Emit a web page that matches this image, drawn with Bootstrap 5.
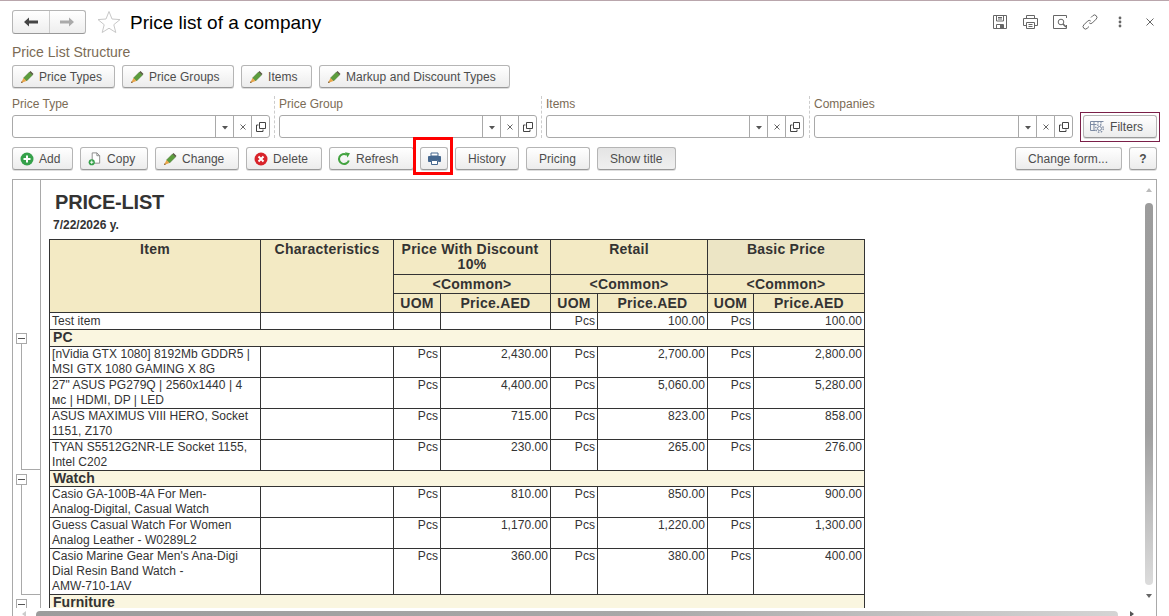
<!DOCTYPE html>
<html lang="en">
<head>
    <meta charset="UTF-8">
    <title>Price list of a company</title>
    <link href="https://cdn.jsdelivr.net/npm/bootstrap@5.3.0/dist/css/bootstrap.min.css" rel="stylesheet">
    <style>
        html, body { height: 616px; overflow: hidden; }
        body { font-family: "Liberation Sans", Arial, sans-serif; font-size: 12px; color: #333; background: #fff; border-top: 1px solid #b9a6ac; padding: 0 12px; }

        .head-row { margin-top: 9px; height: 24px; }
        .hist-group { width: 74px; height: 24px; border: 1px solid #b5b5b5; border-bottom-color: #999; border-radius: 3px; background: linear-gradient(#fff, #eee); }
        .hist-group span { flex: 1; display: flex; align-items: center; justify-content: center; }
        .hist-group span + span { border-left: 1px solid #ccc; }
        .fav-star { margin-left: 11px; }
        .page-title { font-size: 19px; line-height: 24px; color: #000; margin: 1px 0 0 9px; font-weight: 400; }
        .tool-ico { width: 30px; display: flex; justify-content: center; }
        .head-tools { margin-right: -8px; }

        .struct-cap { margin-top: 10px; font-size: 14px; line-height: 17px; color: #7b6b55; }
        .btn-row { gap: 7px; }
        .struct-row { margin-top: 4px; }
        .action-row { margin-top: 9px; }

        .btn.v8-btn { height: 23px; padding: 0 12px; font-size: 12px; line-height: 20px; color: #4d4d4d; letter-spacing: .05px; background: linear-gradient(#fff, #ececec); border: 1px solid #b5b5b5; border-bottom-color: #999; border-radius: 3px; display: inline-flex; align-items: center; gap: 5px; white-space: nowrap; box-shadow: 0 1px 0 #ddd; }
        .btn.v8-ico { padding: 0 0 0 7px; }
        .btn.v8-pressed { background: linear-gradient(#e4e4e4, #f0f0f0); }
        .bw-types { width: 103px; } .bw-groups { width: 112px; } .bw-items { width: 71px; } .bw-markup { width: 191px; }
        .bw-add { width: 61px; } .bw-copy { width: 68px; } .bw-change { width: 84px; } .bw-delete { width: 76px; } .bw-refresh { width: 85px; }
        .bw-history { width: 64px; } .bw-pricing { width: 64px; } .bw-title { width: 79px; } .bw-form { width: 107px; }
        .btn.bw-help { width: 28px; padding: 0; justify-content: center; }
        .print-wrap { position: relative; margin-left: -1px; }
        .print-wrap::after { content: ""; position: absolute; left: -7px; right: -5px; top: -10px; bottom: -5px; border: 3px solid #f00; }
        .btn.print-btn { width: 28px; padding: 0; justify-content: center; }
        .btn.filters-btn { position: relative; width: 74px; margin-left: 10px; padding: 0 6px; gap: 5px; overflow: visible; }
        .btn.filters-btn::after { content: ""; position: absolute; left: -4px; right: -4px; top: -4px; bottom: -5px; border: 1px solid #7a1f48; }

        .filter-row { margin-top: 8px; height: 42px; }
        .filter-field { width: 258px; }
        .filter-field.wide { width: 259px; }
        .filter-label { line-height: 16px; margin-bottom: 3px; color: #7b6b55; }
        .filter-sep { width: 1px; margin: 0 4px 0 4px; border-left: 1px dashed #ccc; }
        .filter-sep.last-sep { margin: 0 4px 0 5px; }
        .input-group .form-control.v8-input { height: 23px; min-height: 23px; padding: 0 4px; font-size: 12px; border-color: #a9a9a9; border-radius: 3px 0 0 3px; }
        .input-group .btn.v8-cell { width: 19px; height: 23px; padding: 0; display: flex; align-items: center; justify-content: center; background: #fff; border: 1px solid #a9a9a9; margin-left: -1px; border-radius: 0; color: #555; }
        .input-group .btn.v8-cell:last-child { border-radius: 0 3px 3px 0; }

        .report-frame { position: relative; margin-top: 9px; width: 1145px; height: 437px; border: 1px solid #a9a9a9; border-bottom: 0; display: flex; overflow: hidden; }
        .outline-gutter { position: relative; flex: 0 0 28px; border-right: 1px solid #a9a9a9; }
        .report-body { flex: 1; padding-left: 8px; }
        .report-title { font-size: 20px; line-height: 24px; font-weight: 700; margin: 10px 0 0 6px; color: #333; letter-spacing: -.2px; }
        .report-date { font-size: 12px; line-height: 15px; font-weight: 700; margin: 4px 0 0 4px; }

        .price-table { table-layout: fixed; border-collapse: collapse; margin-top: 6px; width: 815px; line-height: 15px; letter-spacing: .05px; }
        .price-table td, .price-table th { border: 1px solid #333; padding: 0 2px; vertical-align: top; overflow: hidden; }
        .price-table th { background: #f3eac4; font-size: 14px; text-align: center; font-weight: 700; line-height: 15px; padding-top: 2px; letter-spacing: .25px; }
        .price-table th.hilite { background: #ece5c5; box-shadow: 0 0 0 3px rgba(0, 0, 0, .04); }
        .price-table th.disc-head { text-indent: -4px; }
        .price-table td.num { text-align: right; }
        .price-table td.grp { background: #faf6e0; font-size: 14px; font-weight: 700; padding-left: 3px; }
        .rh-h1 { height: 35px; } .rh-h2 { height: 19px; } .rh-1 { height: 17px; }
        .rh-g { height: 17px; } .rh-g2 { height: 16px; } .rh-2 { height: 31px; } .rh-3 { height: 46px; }
        .rh-1 td { padding-top: 1px; }

        .tree-box { position: absolute; left: 3px; width: 11px; height: 11px; border: 1px solid #a9a9a9; background: #fff; }
        .tree-box::after { content: ""; position: absolute; left: 1px; right: 1px; top: 4px; height: 1px; background: #555; }
        .tree-line { position: absolute; left: 8px; width: 20px; border-left: 1px solid #a9a9a9; border-bottom: 1px solid #a9a9a9; }
        .box-pc { top: 153px; } .line-pc { top: 164px; height: 126px; }
        .box-watch { top: 294px; } .line-watch { top: 305px; height: 110px; }
        .box-furn { top: 419px; }

        .vscroll-area { position: absolute; right: 0; top: 0; bottom: 0; width: 17px; background: #fff; }
        .vscroll-thumb { position: absolute; left: 6px; top: 23px; height: 382px; width: 8px; border-radius: 4px; background: linear-gradient(#9c9c9c, #a0a0a0 60%, #dcdcdc); }
        .arr-up, .arr-down { position: absolute; left: 7px; width: 0; height: 0; border-left: 3px solid transparent; border-right: 3px solid transparent; }
        .arr-up { top: 8px; border-bottom: 4px solid #bbb; }
        .arr-down { top: 414px; border-top: 4px solid #666; }
        .hscroll-area { position: absolute; left: 0; right: 0; top: 428px; height: 9px; background: #fff; }
        .hscroll-thumb { position: absolute; left: 23px; width: 1082px; top: 3px; height: 6px; border-radius: 4px 4px 0 0; background: linear-gradient(90deg, #9c9c9c, #a8a8a8 55%, #d4d4d4); }
        .arr-left { position: absolute; left: 9px; top: 3px; width: 0; height: 0; border-top: 3px solid transparent; border-bottom: 3px solid transparent; border-right: 4px solid #ccc; }
        .arr-right { position: absolute; left: 1117px; top: 3px; width: 0; height: 0; border-top: 3px solid transparent; border-bottom: 3px solid transparent; border-left: 4px solid #555; }
    </style>
</head>
<body>
    <svg width="0" height="0" class="position-absolute">
        <symbol id="i-pencil" viewBox="0 0 14 14">
            <path d="M3.500 8l6-6 3 3-6 6z" fill="#5c9d3c" stroke="#40702c" stroke-width=".5"/>
            <path d="M9.500 2l1-1 3 3-1 1z" fill="#55523f"/>
            <path d="M3.500 8l3 3L1 13z" fill="#e9a54a"/>
            <path d="M1.700 11.300 2.800 12.400 1 13z" fill="#6a4d28"/>
        </symbol>
        <symbol id="i-cross" viewBox="0 0 8 8">
            <path d="M1.500 1.500l5 5M6.500 1.500l-5 5" stroke="#666" stroke-width="1" fill="none"/>
        </symbol>
        <symbol id="i-down" viewBox="0 0 8 8">
            <path d="M1 3h6L4 6.500z" fill="#555"/>
        </symbol>
        <symbol id="i-open" viewBox="0 0 12 12">
            <path d="M4.500 1.500h6v6h-6z M3.500 4h-2v6.500h6.500v-2" fill="none" stroke="#444" stroke-width="1"/>
        </symbol>
    </svg>

    <!-- Cabecera -->
    <div class="d-flex align-items-center head-row">
        <div class="d-flex hist-group">
            <span>
                <svg width="16" height="12" viewBox="0 0 16 12"><path d="M1 6l5-4.500V4.500h9v3H6v3z" fill="#444"/></svg>
            </span>
            <span>
                <svg width="16" height="12" viewBox="0 0 16 12"><path d="M15 6l-5-4.500V4.500H1v3h9v3z" fill="#aaa"/></svg>
            </span>
        </div>
        <svg class="fav-star" width="24" height="24" viewBox="0 0 24 24"><path d="M12 1.500l3 7.500 8 .6-6.200 5.100 2 7.800L12 18.200l-6.800 4.300 2-7.800L1 9.600 9 9z" fill="#fff" stroke="#c8c8c8" stroke-width="1"/></svg>
        <h1 class="page-title">Price list of a company</h1>
        <div class="d-flex align-items-center ms-auto head-tools">
            <span class="tool-ico"><svg width="16" height="16" viewBox="0 0 16 16" fill="none" stroke="#666"><path d="M1.500 1.500h13v13h-13z"/><path d="M4.500 1.500v5.500h7V1.500M6 3.500h4M6 5h4M4.500 14.500v-4h7v4"/><path d="M8 11h3v3H8z" fill="#666" stroke="none"/></svg></span>
            <span class="tool-ico"><svg width="17" height="16" viewBox="0 0 17 16" fill="none" stroke="#666"><path d="M4.500 4.500v-3h8v3M4 11.500H1.500v-7h14v7H13"/><path d="M4.500 8.500h8v6h-8zM6.500 10.500h4M6.500 12.500h4"/></svg></span>
            <span class="tool-ico"><svg width="16" height="16" viewBox="0 0 16 16" fill="none" stroke="#666"><path d="M5 1.500H1.500v13h13V11M5 1.500h9.500V4"/><circle cx="9" cy="8" r="2.800"/><path d="M11 10l3 3" stroke-width="1.600"/></svg></span>
            <span class="tool-ico"><svg width="16" height="16" viewBox="0 0 16 16" fill="none" stroke="#666"><path d="M9 3.500l1.800-1.800a2.300 2.300 0 0 1 3.400 3.400l-3.800 3.800a2.300 2.300 0 0 1-3.200 0"/><path d="M7 12.500l-1.800 1.800a2.300 2.300 0 0 1-3.400-3.400l3.800-3.800a2.300 2.300 0 0 1 3.200 0"/></svg></span>
            <span class="tool-ico"><svg width="4" height="12" viewBox="0 0 4 12" fill="#666"><circle cx="2" cy="2" r="1.400"/><circle cx="2" cy="6" r="1.400"/><circle cx="2" cy="10" r="1.400"/></svg></span>
            <span class="tool-ico"><svg width="10" height="10" viewBox="0 0 10 10"><path d="M1.500 1.500l7 7M8.500 1.500l-7 7" stroke="#666" fill="none"/></svg></span>
        </div>
    </div>

    <div class="struct-cap">Price List Structure</div>
    <div class="d-flex btn-row struct-row">
        <button class="btn v8-btn v8-ico bw-types"><svg width="14" height="14"><use href="#i-pencil"/></svg>Price Types</button>
        <button class="btn v8-btn v8-ico bw-groups"><svg width="14" height="14"><use href="#i-pencil"/></svg>Price Groups</button>
        <button class="btn v8-btn v8-ico bw-items"><svg width="14" height="14"><use href="#i-pencil"/></svg>Items</button>
        <button class="btn v8-btn v8-ico bw-markup"><svg width="14" height="14"><use href="#i-pencil"/></svg>Markup and Discount Types</button>
    </div>

    <!-- Filtros -->
    <div class="d-flex filter-row">
        <div class="filter-field">
            <div class="filter-label">Price Type</div>
            <div class="input-group">
                <input class="form-control v8-input" type="text">
                <button class="btn v8-cell"><svg width="8" height="8"><use href="#i-down"/></svg></button>
                <button class="btn v8-cell"><svg width="8" height="8"><use href="#i-cross"/></svg></button>
                <button class="btn v8-cell"><svg width="12" height="12"><use href="#i-open"/></svg></button>
            </div>
        </div>
        <div class="filter-sep"></div>
        <div class="filter-field">
            <div class="filter-label">Price Group</div>
            <div class="input-group">
                <input class="form-control v8-input" type="text">
                <button class="btn v8-cell"><svg width="8" height="8"><use href="#i-down"/></svg></button>
                <button class="btn v8-cell"><svg width="8" height="8"><use href="#i-cross"/></svg></button>
                <button class="btn v8-cell"><svg width="12" height="12"><use href="#i-open"/></svg></button>
            </div>
        </div>
        <div class="filter-sep"></div>
        <div class="filter-field">
            <div class="filter-label">Items</div>
            <div class="input-group">
                <input class="form-control v8-input" type="text">
                <button class="btn v8-cell"><svg width="8" height="8"><use href="#i-down"/></svg></button>
                <button class="btn v8-cell"><svg width="8" height="8"><use href="#i-cross"/></svg></button>
                <button class="btn v8-cell"><svg width="12" height="12"><use href="#i-open"/></svg></button>
            </div>
        </div>
        <div class="filter-sep last-sep"></div>
        <div class="filter-field wide">
            <div class="filter-label">Companies</div>
            <div class="input-group">
                <input class="form-control v8-input" type="text">
                <button class="btn v8-cell"><svg width="8" height="8"><use href="#i-down"/></svg></button>
                <button class="btn v8-cell"><svg width="8" height="8"><use href="#i-cross"/></svg></button>
                <button class="btn v8-cell"><svg width="12" height="12"><use href="#i-open"/></svg></button>
            </div>
        </div>
        <div class="align-self-end">
            <button class="btn v8-btn filters-btn">
                <svg width="15" height="14" viewBox="0 0 15 14" fill="none" stroke="#7d8ba3"><path d="M.5 1.500h13M.5 4.500h6M.5 1.500v9h5M4 1.500v9M8 1.500v2M11 1.500v2"/><circle cx="9.500" cy="8.500" r="2" /><circle cx="9.500" cy="8.500" r="3.800" stroke-dasharray="1.500 1.500" stroke-width="1.300"/></svg>
                Filters
            </button>
        </div>
    </div>

    <!-- Comandos -->
    <div class="d-flex btn-row action-row">
        <button class="btn v8-btn v8-ico bw-add">
            <svg width="14" height="14" viewBox="0 0 14 14"><circle cx="7" cy="7" r="6.500" fill="#35a14a"/><path d="M7 3.500v7M3.500 7h7" stroke="#fff" stroke-width="2"/></svg>Add
        </button>
        <button class="btn v8-btn v8-ico bw-copy">
            <svg width="14" height="15" viewBox="0 0 15 15"><path d="M4.500 1.500h5l3 3v8h-8z" fill="#fff" stroke="#888"/><path d="M9.500 1.500v3h3" fill="none" stroke="#888"/><circle cx="4" cy="11.500" r="3.300" fill="#35a14a"/><path d="M4 9.700v3.600M2.200 11.500h3.600" stroke="#fff"/></svg>Copy
        </button>
        <button class="btn v8-btn v8-ico bw-change"><svg width="14" height="14"><use href="#i-pencil"/></svg>Change</button>
        <button class="btn v8-btn v8-ico bw-delete">
            <svg width="14" height="14" viewBox="0 0 14 14"><circle cx="7" cy="7" r="6.500" fill="#d8232a"/><path d="M4.500 4.500l5 5M9.500 4.500l-5 5" stroke="#fff" stroke-width="2"/></svg>Delete
        </button>
        <button class="btn v8-btn v8-ico bw-refresh">
            <svg width="14" height="14" viewBox="0 0 14 14" fill="none"><path d="M11.800 8.500A5 5 0 1 1 9.500 2.600" stroke="#43a340" stroke-width="2"/><path d="M8 .2l5 1-2.500 4.300z" fill="#43a340"/></svg>Refresh
        </button>
        <div class="print-wrap">
            <button class="btn v8-btn print-btn">
                <svg width="13" height="13" viewBox="0 0 13 13"><path d="M3 4V1h7v3z" fill="#fff" stroke="#46688f"/><path d="M.5 4.500h12v5h-2V8h-7v1.500h-3z" fill="#46688f" stroke="#46688f" stroke-linejoin="round"/><path d="M3.500 8.500h6v4h-6z" fill="#fff" stroke="#46688f"/></svg>
            </button>
        </div>
        <button class="btn v8-btn bw-history">History</button>
        <button class="btn v8-btn bw-pricing">Pricing</button>
        <button class="btn v8-btn v8-pressed bw-title">Show title</button>
        <button class="btn v8-btn ms-auto bw-form">Change form...</button>
        <button class="btn v8-btn fw-bold bw-help">?</button>
    </div>

    <!-- Reporte -->
    <div class="report-frame">
        <div class="outline-gutter">
            <div class="tree-box box-pc"></div>
            <div class="tree-line line-pc"></div>
            <div class="tree-box box-watch"></div>
            <div class="tree-line line-watch"></div>
            <div class="tree-box box-furn"></div>
        </div>
        <div class="report-body">
            <div class="report-title">PRICE-LIST</div>
            <div class="report-date">7/22/2026 y.</div>
            <table class="price-table">
                <colgroup>
                    <col width="211"><col width="133"><col width="47"><col width="110"><col width="47"><col width="110"><col width="46"><col width="111">
                </colgroup>
                <tr class="rh-h1">
                    <th rowspan="3">Item</th>
                    <th rowspan="3">Characteristics</th>
                    <th colspan="2" class="disc-head">Price With Discount 10%</th>
                    <th colspan="2">Retail</th>
                    <th colspan="2" class="hilite">Basic Price</th>
                </tr>
                <tr class="rh-h2">
                    <th colspan="2">&lt;Common&gt;</th>
                    <th colspan="2">&lt;Common&gt;</th>
                    <th colspan="2">&lt;Common&gt;</th>
                </tr>
                <tr class="rh-h2">
                    <th>UOM</th><th>Price.AED</th><th>UOM</th><th>Price.AED</th><th>UOM</th><th>Price.AED</th>
                </tr>
                <tr class="rh-1">
                    <td>Test item</td><td></td><td></td><td></td>
                    <td class="num">Pcs</td><td class="num">100.00</td><td class="num">Pcs</td><td class="num">100.00</td>
                </tr>
                <tr class="rh-g"><td class="grp" colspan="8">PC</td></tr>
                <tr class="rh-2">
                    <td>[nVidia GTX 1080] 8192Mb GDDR5 | MSI GTX 1080 GAMING X 8G</td><td></td>
                    <td class="num">Pcs</td><td class="num">2,430.00</td><td class="num">Pcs</td><td class="num">2,700.00</td><td class="num">Pcs</td><td class="num">2,800.00</td>
                </tr>
                <tr class="rh-2">
                    <td>27" ASUS PG279Q | 2560x1440 | 4 мс | HDMI, DP | LED</td><td></td>
                    <td class="num">Pcs</td><td class="num">4,400.00</td><td class="num">Pcs</td><td class="num">5,060.00</td><td class="num">Pcs</td><td class="num">5,280.00</td>
                </tr>
                <tr class="rh-2">
                    <td>ASUS MAXIMUS VIII HERO, Socket 1151, Z170</td><td></td>
                    <td class="num">Pcs</td><td class="num">715.00</td><td class="num">Pcs</td><td class="num">823.00</td><td class="num">Pcs</td><td class="num">858.00</td>
                </tr>
                <tr class="rh-2">
                    <td>TYAN S5512G2NR-LE Socket 1155, Intel C202</td><td></td>
                    <td class="num">Pcs</td><td class="num">230.00</td><td class="num">Pcs</td><td class="num">265.00</td><td class="num">Pcs</td><td class="num">276.00</td>
                </tr>
                <tr class="rh-g2"><td class="grp" colspan="8">Watch</td></tr>
                <tr class="rh-2">
                    <td>Casio GA-100B-4A For Men-<br>Analog-Digital, Casual Watch</td><td></td>
                    <td class="num">Pcs</td><td class="num">810.00</td><td class="num">Pcs</td><td class="num">850.00</td><td class="num">Pcs</td><td class="num">900.00</td>
                </tr>
                <tr class="rh-2">
                    <td>Guess Casual Watch For Women Analog Leather - W0289L2</td><td></td>
                    <td class="num">Pcs</td><td class="num">1,170.00</td><td class="num">Pcs</td><td class="num">1,220.00</td><td class="num">Pcs</td><td class="num">1,300.00</td>
                </tr>
                <tr class="rh-3">
                    <td>Casio Marine Gear Men's Ana-Digi Dial Resin Band Watch -<br>AMW-710-1AV</td><td></td>
                    <td class="num">Pcs</td><td class="num">360.00</td><td class="num">Pcs</td><td class="num">380.00</td><td class="num">Pcs</td><td class="num">400.00</td>
                </tr>
                <tr class="rh-g"><td class="grp" colspan="8">Furniture</td></tr>
            </table>
        </div>
        <div class="vscroll-area">
            <div class="arr-up"></div>
            <div class="vscroll-thumb"></div>
            <div class="arr-down"></div>
        </div>
        <div class="hscroll-area">
            <div class="arr-left"></div>
            <div class="hscroll-thumb"></div>
            <div class="arr-right"></div>
        </div>
    </div>

    <script src="https://cdn.jsdelivr.net/npm/bootstrap@5.3.0/dist/js/bootstrap.bundle.min.js"></script>
</body>
</html>
